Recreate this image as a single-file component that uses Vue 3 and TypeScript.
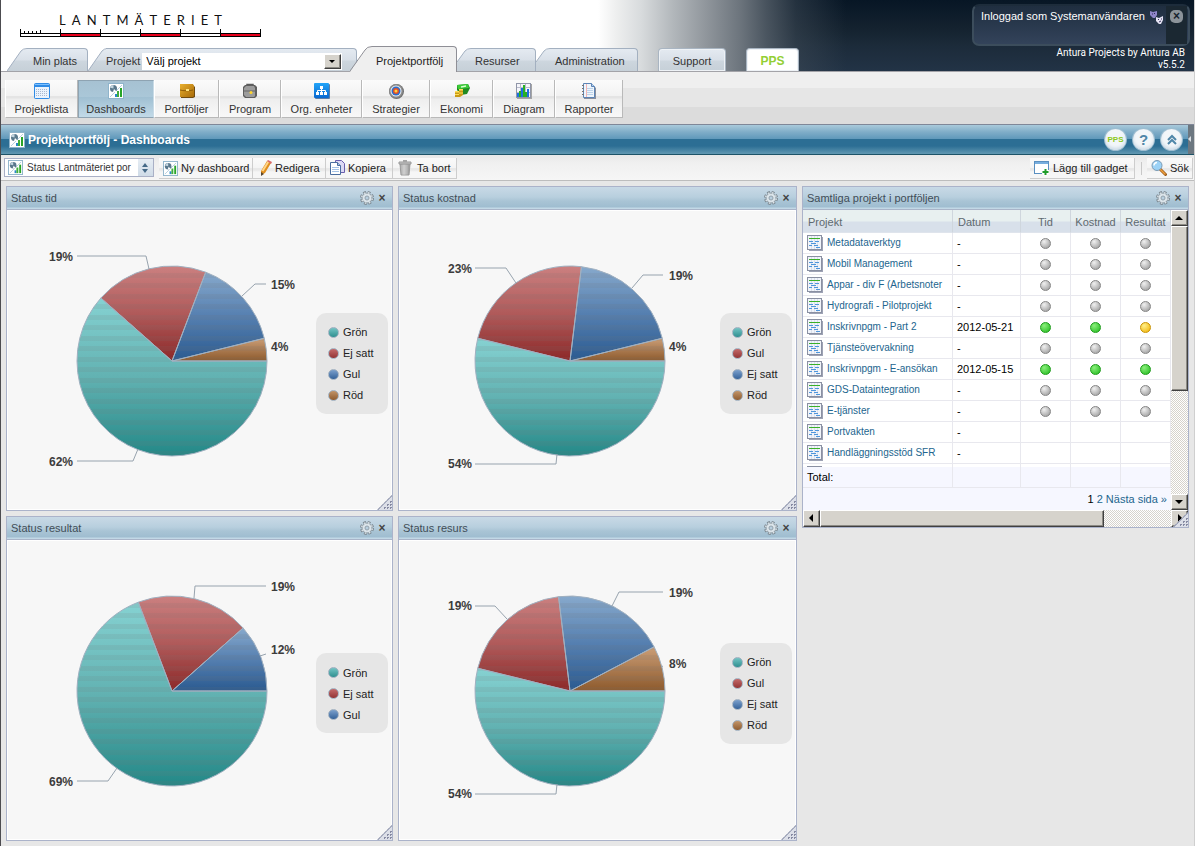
<script setup lang="ts">
import { ref } from 'vue'

interface Slice {
  label: string
  tone: string
  value: number
  percent: string
  text: [number, number]
  line: string
}
interface Chart {
  id: string
  title: string
  cx: number
  slices: Slice[]
}

const logoLetters = 'LANTMÄTERIET'.split('')

const navItems = [
  { label: 'Projektlista', icon: 'list', width: 73 },
  { label: 'Dashboards', icon: 'dash', width: 76 },
  { label: 'Portföljer', icon: 'wallet', width: 65 },
  { label: 'Program', icon: 'case', width: 62 },
  { label: 'Org. enheter', icon: 'org', width: 81 },
  { label: 'Strategier', icon: 'target', width: 68 },
  { label: 'Ekonomi', icon: 'money', width: 63 },
  { label: 'Diagram', icon: 'bars', width: 62 },
  { label: 'Rapporter', icon: 'report', width: 68 },
]

const tones: Record<string, string[]> = {
  green: ['#86d2d2', '#62b2b2', '#238887'],
  red: ['#cb8080', '#b05a5a', '#8c2828'],
  blue: ['#87a9cc', '#557fb0', '#2a5a90'],
  brown: ['#cb9f78', '#ab7b51', '#8d5a2c'],
}

const charts: Chart[] = [
  {
    id: 'tid', title: 'Status tid', cx: 165,
    slices: [
      { label: 'Grön', tone: 'green', value: 16, percent: '62%', text: [42, 256], line: '70,251 126,251 131,239' },
      { label: 'Ej satt', tone: 'red', value: 5, percent: '19%', text: [42, 51], line: '70,46 139,46 142,59' },
      { label: 'Gul', tone: 'blue', value: 4, percent: '15%', text: [264, 79], line: '259,74 248,74 235,86' },
      { label: 'Röd', tone: 'brown', value: 1, percent: '4%', text: [264, 141], line: '' },
    ],
  },
  {
    id: 'kostnad', title: 'Status kostnad', cx: 171,
    slices: [
      { label: 'Grön', tone: 'green', value: 14, percent: '54%', text: [49, 258], line: '76,254 157,254 158,244' },
      { label: 'Gul', tone: 'red', value: 6, percent: '23%', text: [49, 63], line: '76,58 107,58 117,73' },
      { label: 'Ej satt', tone: 'blue', value: 5, percent: '19%', text: [270, 70], line: '264,65 244,65 233,78' },
      { label: 'Röd', tone: 'brown', value: 1, percent: '4%', text: [270, 141], line: '' },
    ],
  },
  {
    id: 'resultat', title: 'Status resultat', cx: 165,
    slices: [
      { label: 'Grön', tone: 'green', value: 18, percent: '69%', text: [42, 246], line: '70,241 101,241 110,228' },
      { label: 'Ej satt', tone: 'red', value: 5, percent: '19%', text: [264, 51], line: '259,46 188,46 187,58' },
      { label: 'Gul', tone: 'blue', value: 3, percent: '12%', text: [264, 114], line: '259,114 253,116' },
    ],
  },
  {
    id: 'resurs', title: 'Status resurs', cx: 171,
    slices: [
      { label: 'Grön', tone: 'green', value: 14, percent: '54%', text: [49, 258], line: '76,254 157,254 158,244' },
      { label: 'Gul', tone: 'red', value: 5, percent: '19%', text: [49, 70], line: '76,66 96,66 108,79' },
      { label: 'Ej satt', tone: 'blue', value: 5, percent: '19%', text: [270, 57], line: '264,52 220,52 213,66' },
      { label: 'Röd', tone: 'brown', value: 2, percent: '8%', text: [270, 128], line: '264,126 262,127' },
    ],
  },
]

const radius = 95
const centerY = 151

function slicePaths(chart: Chart): { d: string; tone: string }[] {
  const total = chart.slices.reduce((sum, s) => sum + s.value, 0)
  let start = 0
  return chart.slices.map((s) => {
    const sweep = (s.value / total) * Math.PI * 2
    const end = start + sweep
    const point = (a: number) =>
      `${(chart.cx + radius * Math.cos(a)).toFixed(2)} ${(centerY + radius * Math.sin(a)).toFixed(2)}`
    const d = `M${chart.cx} ${centerY}L${point(start)}A${radius} ${radius} 0 ${sweep > Math.PI ? 1 : 0} 1 ${point(end)}Z`
    start = end
    return { d, tone: s.tone }
  })
}

const rows = [
  { name: 'Metadataverktyg', date: '-', marks: ['grey', 'grey', 'grey'] },
  { name: 'Mobil Management', date: '-', marks: ['grey', 'grey', 'grey'] },
  { name: 'Appar - div F (Arbetsnoter', date: '-', marks: ['grey', 'grey', 'grey'] },
  { name: 'Hydrografi - Pilotprojekt', date: '-', marks: ['grey', 'grey', 'grey'] },
  { name: 'Inskrivnpgm - Part 2', date: '2012-05-21', marks: ['green', 'green', 'yellow'] },
  { name: 'Tjänsteövervakning', date: '-', marks: ['grey', 'grey', 'grey'] },
  { name: 'Inskrivnpgm - E-ansökan', date: '2012-05-15', marks: ['green', 'green', 'green'] },
  { name: 'GDS-Dataintegration', date: '-', marks: ['grey', 'grey', 'grey'] },
  { name: 'E-tjänster', date: '-', marks: ['grey', 'grey', 'grey'] },
  { name: 'Portvakten', date: '-', marks: ['', '', ''] },
  { name: 'Handläggningsstöd SFR', date: '-', marks: ['', '', ''] },
  { name: '', date: '', marks: ['', '', ''] },
]

const project = ref('Välj projekt')
const dashboard = ref('Status Lantmäteriet por')
</script>

<template>
  <div class="page">
    <svg class="sprite" aria-hidden="true">
      <defs>
        <linearGradient v-for="(stops, name) in tones" :id="'g-' + name" :key="name" x1="0" y1="0" x2="0" y2="1">
          <stop offset="0" :stop-color="stops[0]" />
          <stop offset="0.5" :stop-color="stops[1]" />
          <stop offset="1" :stop-color="stops[2]" />
        </linearGradient>
        <linearGradient id="g-tab" x1="0" y1="0" x2="0" y2="1">
          <stop offset="0" stop-color="#e4eaf1" />
          <stop offset="0.5" stop-color="#d9e0e8" />
          <stop offset="0.55" stop-color="#cdd6de" />
          <stop offset="1" stop-color="#c6d0d8" />
        </linearGradient>
        <linearGradient id="g-azure" x1="0" y1="0" x2="0" y2="1">
          <stop offset="0" stop-color="#22a4f8" />
          <stop offset="1" stop-color="#0868d0" />
        </linearGradient>
        <linearGradient id="g-gold" x1="0" y1="0" x2="1" y2="1">
          <stop offset="0" stop-color="#e9b02e" />
          <stop offset="1" stop-color="#a86a08" />
        </linearGradient>
        <linearGradient id="g-metal" x1="0" y1="0" x2="1" y2="0">
          <stop offset="0" stop-color="#9a9a9a" />
          <stop offset="0.4" stop-color="#ececec" />
          <stop offset="1" stop-color="#8a8a8a" />
        </linearGradient>
        <pattern id="p-bands" width="300" height="21" patternUnits="userSpaceOnUse">
          <path d="M0 0h300v5H0zM0 10h300v5H0z" fill="#777" fill-opacity="0.12" />
        </pattern>
        <symbol id="i-list" viewBox="0 0 16 16">
          <rect x="0" y="0" width="16" height="16" rx="2" fill="#2f8be6" />
          <rect x="1" y="4" width="14" height="11" fill="#eaf3fd" />
          <path d="M1 1.500h14" stroke="#7cc0ff" />
          <path d="M2 6.500h12M2 8.500h12M2 10.500h12M2 12.500h12" stroke="#a9b8d0" stroke-dasharray="1 1" />
        </symbol>
        <symbol id="i-dash" viewBox="0 0 16 16">
          <rect x="0.5" y="0.5" width="15" height="15" fill="#fff" stroke="#8fb4cb" />
          <path d="M2 14 14 2" stroke="#b6cfde" stroke-width="1" />
          <circle cx="5.500" cy="5.500" r="3.500" fill="#59788c" />
          <path d="M5.500 5.500V2a3.500 3.500 0 0 0-3.400 2.800z" fill="#c2d4df" />
          <path d="m6 6 3 3H5z" fill="#fff" />
          <rect x="7" y="11" width="2" height="3" fill="#2b87c8" />
          <rect x="9" y="8" width="2" height="6" fill="#3fae3a" />
          <rect x="12" y="5" width="2" height="9" fill="#28a428" />
        </symbol>
        <symbol id="i-wallet" viewBox="0 0 16 16">
          <path d="M2 2h12l2 2v10l-2 1H2z" fill="#6e4a10" />
          <path d="M1 1h13l1 2v10l-1 1H1z" fill="url(#g-gold)" />
          <path d="M1 7c3 1 10 1 13 0" stroke="#8d5a08" fill="none" />
          <rect x="7" y="6" width="3" height="2" fill="#ffe27a" />
        </symbol>
        <symbol id="i-case" viewBox="0 0 16 16">
          <path d="M5 4V1.500h6V4" stroke="#5b5b5b" stroke-width="1.500" fill="none" />
          <path d="m1 4 2-2h10l2 2v9l-2 2H3l-2-2z" fill="#5e5e5e" />
          <path d="m2 5 2-2h8l1 2v8l-1 1H4l-2-2z" fill="#9c9c9c" />
          <path d="M2 8h12" stroke="#666" />
          <circle cx="9" cy="9.500" r="1.500" fill="#ffd52e" />
        </symbol>
        <symbol id="i-org" viewBox="0 0 16 16">
          <rect x="1" y="1" width="15" height="15" rx="1" fill="#5b7ea8" />
          <rect x="0" y="0" width="15" height="15" rx="1" fill="url(#g-azure)" />
          <path d="M6 3h3v3H6zM2 9h3v3H2zM6 9h3v3H6zM10 9h3v3h-3z" fill="#fff" />
          <path d="M7.500 6v3M3.500 9V7.500h8V9" stroke="#fff" fill="none" />
        </symbol>
        <symbol id="i-target" viewBox="0 0 16 16">
          <circle cx="8.500" cy="8.500" r="7.500" fill="#6f6f6f" />
          <circle cx="8" cy="8" r="7" fill="#8b8b8b" />
          <circle cx="8" cy="8" r="5.500" fill="#e8eef5" />
          <circle cx="8" cy="8" r="4.500" fill="#2d6dc8" />
          <circle cx="8" cy="8" r="3" fill="#e2502a" />
          <circle cx="8" cy="8" r="1.500" fill="#ffd23b" />
        </symbol>
        <symbol id="i-money" viewBox="0 0 16 16">
          <path d="m3 2 11-1 2 4-3 6-6 1-4-5z" fill="#1f8a22" />
          <path d="m3 2 11-1 1 4L4 6z" fill="#3ccc38" />
          <path d="m7 4 5-1" stroke="#d8ffd0" stroke-width="1.500" />
          <path d="M1 8h4V6h4v6l-3 2H1z" fill="#c99a14" />
          <path d="M1 8h4v1.500H1zM5 6h4v1.500H5zM1 11h4v1H1zM5 9.500h4v1H5z" fill="#ffe05a" />
        </symbol>
        <symbol id="i-bars" viewBox="0 0 16 16">
          <rect x="1" y="1" width="15" height="15" fill="#a5a5a5" />
          <rect x="0.500" y="0.500" width="14" height="14" fill="#f5f5fa" stroke="#9096a8" />
          <path d="M4.500 1v13M9.500 1v13M1 4.500h13M1 9.500h13" stroke="#b9bccb" />
          <path d="M1 10h2v4H1zM5 5h2v9H5zM11 6h2v8h-2z" fill="#1d6fe0" />
          <path d="M3 8h2v6H3zM7 2h2v12H7zM9 9h2v5H9z" fill="#27b023" />
        </symbol>
        <symbol id="i-report" viewBox="0 0 16 16">
          <path d="M3 1h8l4 4v11H3z" fill="#8a8f9c" />
          <path d="M2.500 0.500h8l3 3v11h-11z" fill="#eef5fc" stroke="#5c84b6" />
          <path d="M10.500 0.500v3h3" fill="#b6d2ee" stroke="#5c84b6" />
          <path d="M5.500 1v13" stroke="#f0b4b4" />
          <path d="M6 5.500h6M6 7.500h6M6 9.500h6M6 11.500h6" stroke="#bcd3ea" />
          <path d="M1 2.500h2M1 5.500h2M1 8.500h2M1 11.500h2" stroke="#777" />
        </symbol>
        <symbol id="i-pencil" viewBox="0 0 16 16">
          <path d="M4 11 10 1l4 2-6 10-4 2z" fill="#e08f1e" />
          <path d="m5.500 11 6-9.500" stroke="#ffd58a" stroke-width="2" />
          <path d="m10 1 1-1 4 2-1 2z" fill="#d86a6a" />
          <path d="m4 12 3 2-3 2z" fill="#5a4630" />
        </symbol>
        <symbol id="i-copy" viewBox="0 0 16 16">
          <path d="M5.500 0.500h6l3 3v9h-9z" fill="#dcd8f4" stroke="#6a5fae" />
          <path d="M0.500 2.500h7l3 3v9h-10z" fill="#fff" stroke="#4a6d9f" />
          <path d="M7.500 2.500v3h3" fill="#a9c4e4" stroke="#4a6d9f" />
          <path d="M2 7.500h7M2 9.500h7M2 11.500h7" stroke="#a4c2e6" />
        </symbol>
        <symbol id="i-trash" viewBox="0 0 16 16">
          <path d="M3 4h10l-1 11H4z" fill="url(#g-metal)" stroke="#9b9b9b" />
          <path d="M6 5v9M8 5v9M10 5v9" stroke="#b4b4b4" />
          <path d="M2 2h12v2H2z" fill="#c4c4c4" stroke="#999" />
          <path d="M6 0h4v2H6z" fill="#a5a5a5" />
        </symbol>
        <symbol id="i-addgadget" viewBox="0 0 16 16">
          <rect x="0.500" y="1.500" width="14" height="12" fill="#fff" stroke="#5a8fc0" />
          <path d="M1 2h13v2H1z" fill="#78aede" />
          <path d="M8 12h7M11.500 8.500v7" stroke="#fff" stroke-width="4" />
          <path d="M8.500 12h6M11.500 9v6" stroke="#1f9c2a" stroke-width="2" />
        </symbol>
        <symbol id="i-search" viewBox="0 0 16 16">
          <path d="m9 9 5.500 5.500" stroke="#9a5a1a" stroke-width="3" stroke-linecap="round" />
          <path d="m9 9 5 5" stroke="#f0a03c" stroke-width="1.500" stroke-linecap="round" />
          <circle cx="6" cy="5.500" r="5" fill="#9cd2f6" stroke="#7a9ab4" />
          <path d="M3 5.500a3 3 0 0 1 3-3" stroke="#fff" stroke-width="1.500" fill="none" />
        </symbol>
        <symbol id="i-gantt" viewBox="0 0 16 16">
          <path d="M2 2h14v14H2z" fill="#9da2b4" />
          <path d="M0 0h15v15H0z" fill="#8a90a2" />
          <path d="M1 1h13v13H1z" fill="#f1f4fa" />
          <path d="M4 1h1v13H4zM7 1h1v13H7zM10 1h1v13h-1z" fill="#dbe0ec" />
          <path d="M2 3h11v1H2z" fill="#39b028" />
          <path d="M2 6h4v1H2zM8 6h4v1H8zM4 8h5v1H4zM2 10h3v1H2zM7 10h4v1H7zM9 12h4v1H9z" fill="#4f96dc" />
        </symbol>
        <symbol id="i-gear" viewBox="0 0 14 14">
          <circle cx="7" cy="7" r="5" fill="none" stroke="#7c8891" stroke-width="4" stroke-dasharray="2.430 1.500" />
          <circle cx="7" cy="7" r="5" fill="#dbe4ea" stroke="#8b979f" />
          <circle cx="7" cy="7" r="5.300" fill="none" stroke="#dbe4ea" stroke-width="1.500" stroke-dasharray="1.500 2.660" stroke-dashoffset="-0.500" />
          <circle cx="7" cy="7" r="2" fill="#b8cfdf" stroke="#94a2ac" />
        </symbol>
        <symbol id="i-masks" viewBox="0 0 16 16">
          <path d="m1 2 3 1 4-1v4L6 9H4L1 6z" fill="#8f86c8" />
          <path d="M3 5h1M5 4.500h1" stroke="#312a5c" />
          <path d="m7 8 3 1 4-2v4l-2 4h-2L7 12z" fill="#e6e4f4" />
          <path d="M9 10.500h1M12 10h1M10 13l2-1" stroke="#3b3560" />
        </symbol>
      </defs>
    </svg>

    <header class="banner">
      <div class="brand" aria-label="LANTMÄTERIET">
        <div class="letters"><span v-for="(l, i) in logoLetters" :key="i">{{ l }}</span></div>
        <svg class="ruler" viewBox="0 0 241 8" aria-hidden="true">
          <path d="M0 4h241v4H0z" fill="#000" />
          <path d="M1 5h239v2H1z" fill="#fff" />
          <path d="M41 5h39v2H41zM121 5h39v2h-39zM201 5h39v2h-39z" fill="#e8001c" />
          <path d="M0.500 0v8M40.500 0v8M80.500 0v8M120.500 0v8M160.500 0v8M200.500 0v8M240.500 0v8M20.500 1v3M4.500 2v2M8.500 2v2M12.500 2v2M16.500 2v2" stroke="#000" />
        </svg>
      </div>

      <nav class="tabs" aria-label="Huvudmeny">
        <a class="tab" href="#"><svg viewBox="0 0 20 23"><path d="M0 23 14 3Q16 1 20 1V23z" fill="url(#g-tab)" /><path d="M0 23 14 3Q16 0.500 20 0.500" fill="none" stroke="#a3b0c0" /></svg><span class="face w-min">Min plats</span></a>
        <div class="tab">
          <svg viewBox="0 0 20 23"><path d="M0 23 14 3Q16 1 20 1V23z" fill="url(#g-tab)" /><path d="M0 23 14 3Q16 0.500 20 0.500" fill="none" stroke="#a3b0c0" /></svg>
          <div class="face w-projekt">
            <label for="project">Projekt</label>
            <span class="combo">
              <select id="project" v-model="project"><option>Välj projekt</option></select>
              <i aria-hidden="true"></i>
            </span>
          </div>
        </div>
        <a class="tab current" href="#"><svg viewBox="0 0 22 26"><path d="M0 26 15 4Q17 1 22 1V26z" fill="#efefef" /><path d="M0 25 15 4Q17 0.500 22 0.500" fill="none" stroke="#8f8f96" /></svg><span class="face w-port">Projektportfölj</span></a>
        <a class="tab" href="#"><svg viewBox="0 0 20 23"><path d="M0 14 8 3Q10 1 14 1H20V23H0z" fill="url(#g-tab)" /><path d="M0 14 8 3Q10 0.500 14 0.500H20" fill="none" stroke="#a3b0c0" /></svg><span class="face w-res">Resurser</span></a>
        <a class="tab" href="#"><svg viewBox="0 0 20 23"><path d="M0 14 8 3Q10 1 14 1H20V23H0z" fill="url(#g-tab)" /><path d="M0 14 8 3Q10 0.500 14 0.500H20" fill="none" stroke="#a3b0c0" /></svg><span class="face w-adm">Administration</span></a>
        <a class="tab solo" href="#">Support</a>
        <a class="tab solo pps" href="#">PPS</a>
      </nav>

      <div class="account">
        <div class="userbox">
          <span>Inloggad som Systemanvändaren</span>
          <svg class="masks"><use href="#i-masks" /></svg>
          <div class="strip"><button type="button" aria-label="Stäng">×</button></div>
        </div>
        <div class="version">Antura Projects by Antura AB<br />v5.5.2</div>
      </div>
    </header>

    <nav class="subnav" aria-label="Projektportfölj">
      <a
        v-for="item in navItems"
        :key="item.label"
        href="#"
        :class="{ active: item.icon === 'dash' }"
        :style="{ width: item.width + 'px' }"
      >
        <svg class="ico"><use :href="'#i-' + item.icon" /></svg>
        {{ item.label }}
      </a>
    </nav>

    <div class="titlebar">
      <svg class="ico"><use href="#i-dash" /></svg>
      <h1>Projektportfölj - Dashboards</h1>
      <div class="rounds">
        <button type="button" class="lime">PPS</button>
        <button type="button" class="help">?</button>
        <button type="button" aria-label="Minimera">
          <svg viewBox="0 0 12 12"><path d="m2 6 4-4 4 4M2 10l4-4 4 4" fill="none" stroke="#4f86a8" stroke-width="2" /></svg>
        </button>
      </div>
      <button type="button" class="handle" aria-label="Visa panel"></button>
    </div>

    <div class="toolbar">
      <div class="picker">
        <svg class="ico"><use href="#i-dash" /></svg>
        <select v-model="dashboard" aria-label="Dashboard"><option>Status Lantmäteriet por</option></select>
        <i aria-hidden="true"><svg viewBox="0 0 8 10"><path d="m4 0 3 4H1zM4 10 1 6h6z" fill="#456a88" /></svg></i>
      </div>
      <div class="tools">
        <button type="button" class="t-new"><svg class="ico"><use href="#i-dash" /></svg>Ny dashboard</button>
        <button type="button" class="t-edit"><svg class="ico"><use href="#i-pencil" /></svg>Redigera</button>
        <button type="button" class="t-copy"><svg class="ico"><use href="#i-copy" /></svg>Kopiera</button>
        <button type="button" class="t-del"><svg class="ico"><use href="#i-trash" /></svg>Ta bort</button>
      </div>
      <div class="tools right">
        <button type="button" class="t-add"><svg class="ico"><use href="#i-addgadget" /></svg>Lägg till gadget</button>
        <span class="rule"></span>
        <button type="button" class="t-find"><svg class="ico"><use href="#i-search" /></svg>Sök</button>
      </div>
    </div>

    <main class="board">
      <section v-for="(chart, index) in charts" :key="chart.id" class="panel" :class="'slot' + index">
        <header>
          <h2>{{ chart.title }}</h2>
          <button type="button" aria-label="Inställningar"><svg class="gear"><use href="#i-gear" /></svg></button>
          <button type="button" class="close" aria-label="Stäng">×</button>
        </header>
        <div class="body">
          <svg class="pie" viewBox="0 0 300 300" role="img" :aria-label="chart.title">
            <path v-for="p in slicePaths(chart)" :key="p.tone" :d="p.d" :fill="`url(#g-${p.tone})`" />
            <circle :cx="chart.cx" :cy="centerY" :r="radius" fill="url(#p-bands)" />
            <path v-for="p in slicePaths(chart)" :key="p.tone + '-edge'" :d="p.d" fill="none" stroke="#a0b0c0" />
            <g v-for="s in chart.slices" :key="s.label">
              <polyline v-if="s.line" :points="s.line" fill="none" stroke="#97a3ae" />
              <text :x="s.text[0]" :y="s.text[1]">{{ s.percent }}</text>
            </g>
          </svg>
          <ul class="legend">
            <li v-for="s in chart.slices" :key="s.label"><i :class="s.tone"></i>{{ s.label }}</li>
          </ul>
        </div>
        <span class="grip"></span>
      </section>

      <section class="panel projects">
        <header>
          <h2>Samtliga projekt i portföljen</h2>
          <button type="button" aria-label="Inställningar"><svg class="gear"><use href="#i-gear" /></svg></button>
          <button type="button" class="close" aria-label="Stäng">×</button>
        </header>
        <div class="scroller">
          <div class="sheet">
            <div class="clip">
              <table>
                <colgroup><col /><col class="c-date" /><col class="c-mark" /><col class="c-mark" /><col class="c-mark" /></colgroup>
                <thead>
                  <tr><th>Projekt</th><th>Datum</th><th class="mid">Tid</th><th class="mid">Kostnad</th><th class="mid">Resultat</th></tr>
                </thead>
                <tbody>
                  <tr v-for="(row, r) in rows" :key="r">
                    <td><a href="#"><svg class="ico"><use href="#i-gantt" /></svg>{{ row.name }}</a></td>
                    <td>{{ row.date }}</td>
                    <td v-for="(m, k) in row.marks" :key="k" class="mid"><i v-if="m" class="dot" :class="m"></i></td>
                  </tr>
                </tbody>
              </table>
            </div>
            <div class="total"><span>Total:</span><span></span><span></span><span></span><span></span></div>
            <div class="pager"><b>1</b> <a href="#">2</a> <a href="#">Nästa sida »</a></div>
          </div>
          <div class="vbar" aria-hidden="true">
            <span class="key up"></span><span class="thumb"></span><span class="track"></span><span class="key down"></span>
          </div>
        </div>
        <div class="hbar" aria-hidden="true">
          <span class="key left"></span><span class="thumb"></span><span class="track"></span><span class="key next"></span>
        </div>
        <span class="grip"></span>
      </section>
    </main>
  </div>
</template>

<style>
html,
body {
  margin: 0;
  background: #e7e7e7;
}
</style>

<style scoped>
* { box-sizing: border-box; }
.page {
  min-height: 100vh;
  border-left: 1px solid #4c4c50;
  border-right: 1px solid #cfcfcf;
  background: #e7e7e7;
  font-family: "Liberation Sans", Arial, sans-serif;
  font-size: 11px;
  color: #333;
}
.sprite { position: absolute; width: 0; height: 0; }
a { color: inherit; text-decoration: none; }
button { font: inherit; color: inherit; border: 0; padding: 0; margin: 0; background: none; cursor: pointer; }
.ico { width: 16px; height: 16px; flex: none; }

/* banner */
.banner {
  position: relative;
  display: flex;
  flex-direction: column;
  justify-content: space-between;
  height: 72px;
  border-bottom: 1px solid #a3a3a8;
  background:
    linear-gradient(90deg, #fff 597px, #eeefef 615px, #d8dbdd 640px, #b2b7bb 672px, #90969c 705px, rgba(112, 120, 128, 0.95) 740px, rgba(88, 98, 108, 0.8) 765px, rgba(64, 76, 88, 0.5) 795px, rgba(50, 64, 80, 0) 845px),
    linear-gradient(#071625, #14222f 40%, #1c2b3a 65%, #223346);
}
.brand { width: 241px; margin: 12px 0 0 19px; }
.letters {
  display: flex;
  justify-content: space-between;
  margin: 0 39px 0 39px;
  font-family: Lato, sans-serif;
  font-size: 13px;
  line-height: 16px;
  color: #111;
}
.ruler { display: block; width: 241px; height: 8px; margin-top: 1px; }

.tabs { display: flex; align-items: flex-end; padding-left: 6px; line-height: 14px; }
.tab { display: flex; height: 23px; color: #333; }
.tab > svg { width: 20px; height: 23px; flex: none; }
.face {
  display: flex;
  align-items: center;
  border-top: 1px solid #a3b0c0;
  border-right: 1px solid #a3b0c0;
  border-radius: 0 4px 0 0;
  background: linear-gradient(#e4eaf1, #d9e0e8 50%, #cdd6de 55%, #c6d0d8);
  padding-top: 2px;
}
.w-min { width: 61px; padding-left: 6px; }
.w-projekt { width: 251px; margin-left: -2px; gap: 2px; }
.current { height: 26px; margin: 0 0 -1px -7px; z-index: 1; color: #222; }
.current > svg { width: 22px; height: 26px; }
.current .face { border-color: #8f8f96; background: #efefef; }
.w-port { width: 85px; padding-left: 4px; }
.w-res { width: 61px; margin-left: -2px; }
.w-adm { width: 83px; margin-left: -1px; }
.solo {
  align-items: center;
  justify-content: center;
  width: 68px;
  margin-left: 20px;
  padding-top: 2px;
  border: 1px solid #a9b5c2;
  border-bottom: 0;
  border-radius: 4px 4px 0 0;
  background: linear-gradient(#e4eaf1, #d9e0e8 50%, #cdd6de 55%, #c6d0d8);
  box-shadow: inset 0 0 0 1px #eef2f6;
}
.pps { width: 53px; background: #fff; color: #93cf35; font-weight: bold; font-size: 12px; }
.combo { position: relative; display: flex; width: 200px; height: 17px; background: #fff; }
.combo select {
  appearance: none;
  width: 100%;
  border: 0;
  padding: 0 20px 0 4px;
  background: none;
  font: inherit;
  color: #000;
}
.combo i, .key, .thumb {
  background: #d6d3cc;
  border: 1px solid;
  border-color: #fff #404040 #404040 #fff;
  box-shadow: inset -1px -1px #8c8a84;
}
.combo i { position: absolute; right: 1px; top: 1px; width: 17px; height: 15px; pointer-events: none; }
.combo i::after {
  content: "";
  position: absolute;
  left: 4px;
  top: 5px;
  border: 3px solid transparent;
  border-top-color: #000;
}

.account { position: absolute; right: 4px; top: 4px; color: #fff; }
.userbox {
  display: flex;
  width: 218px;
  height: 42px;
  padding: 0 1px 0 7px;
  line-height: 20px;
  border: 2px solid #3c4d5c;
  border-top-color: #1d2c3b;
  border-radius: 7px;
  background: linear-gradient(#1f2e40, #33435a);
}
.userbox span { flex: 1; white-space: nowrap; }
.masks { width: 16px; height: 16px; margin: 3px 1px 0 0; }
.strip { width: 21px; background: #1b2832; text-align: center; }
.strip button {
  width: 13px;
  height: 13px;
  border-radius: 5px;
  background: #8c9399;
  color: #16222c;
  font-weight: bold;
  font-size: 12px;
  line-height: 12px;
}
.version { padding: 1px 5px 0 0; font-family: Roboto, sans-serif; font-size: 10px; line-height: 12px; text-align: right; }

/* section navigation */
.subnav {
  display: flex;
  padding: 8px 4px 6px;
  background: linear-gradient(#efefef 16px, #e6e6e6 16px 35px, #dcdcdc 35px);
}
.subnav a {
  display: flex;
  flex-direction: column;
  align-items: center;
  gap: 4px;
  height: 38px;
  padding-top: 3px;
  border-right: 1px solid #b9b9b9;
  border-bottom: 1px solid #b9b9b9;
  border-left: 1px solid #fff;
  background: linear-gradient(#fbfbfb, #f2f2f2 16px, #e4e4e4 16px 18px, #eee 19px, #f8f8f8);
  line-height: 13px;
  white-space: nowrap;
}
.subnav a.active {
  padding-top: 2px;
  border: 1px solid #8ea3b2;
  border-right-color: #c9dbe6;
  background: linear-gradient(#a6c1d2, #aac7d8 16px, #9fbfd2 16px, #c2dae8);
}

/* title bar */
.titlebar {
  display: flex;
  align-items: center;
  height: 31px;
  padding-left: 8px;
  border-top: 1px solid #7f8798;
  border-bottom: 1px solid #1d5368;
  background: linear-gradient(#a9cadb, #80adc8 7px, #5f98ba 14px, #2c6e94 14px 21px, #6198b2);
  color: #fff;
}
.titlebar h1 { flex: 1; margin: 0 0 0 3px; font-size: 12px; line-height: 16px; }
.rounds { display: flex; gap: 7px; margin-right: 6px; }
.rounds button {
  display: flex;
  align-items: center;
  justify-content: center;
  width: 21px;
  height: 21px;
  border-radius: 50%;
  background: #f2f6f9;
  box-shadow: 0 0 0 1px #9dbdd0, inset 0 -2px 3px #cfdde8;
  color: #4f86a8;
}
.rounds svg { width: 12px; height: 12px; }
.rounds .lime { font-size: 8px; font-weight: bold; color: #8cc820; }
.rounds .help { font-size: 15px; font-weight: bold; }
.handle { width: 6px; height: 29px; background: #6c7780; position: relative; }
.handle::after { content: ""; position: absolute; left: 0; top: 11px; border: 3px solid transparent; border-left: 0; border-right-color: #d8dde2; }

/* toolbar */
.toolbar {
  display: flex;
  align-items: flex-start;
  height: 26px;
  padding: 3px 1px 0 3px;
  border-bottom: 1px solid #bdbdbd;
  background: linear-gradient(#e8e8e8, #f0f0f0 8px, #f6f6f6);
}
.picker {
  display: flex;
  align-items: center;
  width: 150px;
  height: 19px;
  padding-left: 3px;
  border: 1px solid #a9b0c6;
  background: #fff;
}
.picker .ico, .t-new .ico { width: 15px; height: 15px; }
.picker select { appearance: none; flex: 1; min-width: 0; border: 0; padding: 0 0 0 4px; background: none; font: inherit; font-size: 10px; color: #333; }
.picker i { width: 15px; height: 17px; padding: 4px 3px; background: linear-gradient(#e6edf4, #cfdbe7); }
.picker i svg { display: block; width: 8px; height: 10px; }
.tools { display: flex; height: 21px; margin-left: 5px; }
.tools button {
  display: flex;
  align-items: center;
  gap: 4px;
  padding: 0 0 0 4px;
  border-right: 1px solid #cdcdcd;
  border-bottom: 1px solid #cdcdcd;
  background: linear-gradient(#fafafa, #f4f4f4 10px, #e8e8e8 10px 12px, #f6f6f6 14px);
  white-space: nowrap;
  color: #222;
}
.tools .t-new { width: 94px; gap: 3px; }
.tools .t-edit { width: 73px; gap: 2px; }
.tools .t-copy { width: 67px; gap: 2px; }
.tools .t-del { width: 64px; }
.tools .t-add { width: 105px; gap: 3px; }
.tools .t-find { width: 46px; gap: 3px; }
.right { margin-left: auto; }
.rule { width: 1px; margin: 4px 5px 4px 6px; background: #c8c8c8; }

/* dashboard grid */
.board {
  display: grid;
  grid-template-columns: 387fr 399fr 387fr;
  gap: 5px;
  align-items: start;
  padding: 5px;
}
.slot0 { grid-area: 1 / 1; }
.slot1 { grid-area: 1 / 2; }
.slot2 { grid-area: 2 / 1; }
.slot3 { grid-area: 2 / 2; }
.projects { grid-area: 1 / 3 / 3 / 4; }
.panel { position: relative; border: 1px solid #abb3ca; background: #fff; min-width: 0; }
.panel header {
  display: flex;
  align-items: center;
  height: 23px;
  padding: 0 2px 0 4px;
  border-bottom: 1px solid #a9b4c8;
  background: linear-gradient(#c8d9e6, #b8cfde 10px, #a9c4d5 14px, #9fbdd0 20px, #c2d8e6 21px);
}
.panel h2 { flex: 1; margin: 0; font-size: 11px; font-weight: normal; line-height: 14px; color: #3f4d57; }
.gear { display: block; width: 14px; height: 14px; }
.close { width: 16px; font-size: 12px; font-weight: bold; line-height: 14px; color: #444; }
.body {
  display: flex;
  align-items: center;
  justify-content: space-between;
  height: 300px;
  border: 1px solid #fff;
  background: #f7f7f7;
}
.pie { width: 300px; height: 300px; flex: none; margin-left: -1px; }
.pie text { font-size: 12px; font-weight: bold; fill: #3c3c3c; }
.legend {
  flex: none;
  width: 72px;
  margin: 6px 3px 0 0;
  padding: 9px 0 8px 12px;
  border-radius: 10px;
  background: #e6e6e6;
  list-style: none;
}
.legend li { display: flex; align-items: center; gap: 4px; height: 21px; color: #222; }
.legend i { width: 11px; height: 11px; border-radius: 50%; border: 1px solid #a0b0c0; }
.legend .green { background: linear-gradient(#74c4c4, #2f9090); }
.legend .red { background: linear-gradient(#c46a6a, #943434); }
.legend .blue { background: linear-gradient(#7ba0cc, #34629a); }
.legend .brown { background: linear-gradient(#c29468, #8f5c30); }
.grip {
  position: absolute;
  right: 0;
  bottom: 0;
  width: 15px;
  height: 15px;
  background:
    linear-gradient(135deg, #a2a8bc 54%, #dcdfe8 54% 64%, transparent 64%),
    conic-gradient(#868aa2 25%, #dcdfe8 0) 0 0 / 3px 3px;
  clip-path: polygon(100% 0, 100% 100%, 0 100%);
}

/* project table */
.scroller { display: flex; }
.sheet { flex: 1; min-width: 0; }
.clip { height: 257px; overflow: hidden; }
table { width: 100%; table-layout: fixed; border-collapse: separate; border-spacing: 0; }
.c-date { width: 68px; }
.c-mark { width: 50px; }
th {
  height: 23px;
  padding: 2px 5px 0;
  border-right: 1px solid #cfd6dd;
  border-bottom: 1px solid #dfe4ec;
  background: linear-gradient(#e8f0f0 11px, #d8e0ea 12px);
  font-weight: normal;
  text-align: left;
  color: #5f6a70;
}
td {
  height: 21px;
  padding: 2px 0 2px 4px;
  border-right: 1px solid #e8e8ee;
  border-bottom: 1px solid #e8e8ee;
  color: #000;
  line-height: 16px;
  vertical-align: top;
}
td a { display: flex; align-items: center; gap: 4px; font-size: 10px; white-space: nowrap; color: #22658e; }
th.mid { padding: 2px 0 0; }
.mid { text-align: center; }
td.mid { padding: 5px 0 0; }
.dot { display: block; width: 11px; height: 11px; margin: 0 auto; border-radius: 50%; border: 1px solid; }
.grey { border-color: #858585; background: radial-gradient(circle at 35% 30%, #f0f0f0, #949494); }
.green.dot { border-color: #1d9c1a; background: radial-gradient(circle at 35% 30%, #8af07c, #1fb81a); }
.yellow { border-color: #c99200; background: radial-gradient(circle at 35% 30%, #fff08a, #f0b000); }
.total { display: grid; grid-template-columns: 1fr 68px 50px 50px 50px; height: 21px; background: #f6f7ff; color: #000; line-height: 20px; }
.total span { padding-left: 4px; border-right: 1px solid #e8e8ee; border-bottom: 1px solid #e8e8ee; }
.pager { height: 22px; padding-right: 4px; background: #f6f7ff; line-height: 22px; text-align: right; color: #22658e; }
.pager b { font-weight: normal; color: #000; }
.vbar { display: flex; flex-direction: column; width: 17px; }
.hbar { display: flex; height: 17px; }
.track {
  flex: 1;
  background: repeating-conic-gradient(#fff 0 25%, #d6d3cc 0 50%) 0 0 / 2px 2px;
}
.key { position: relative; flex: none; width: 17px; height: 16px; }
.key::after { content: ""; position: absolute; border: 4px solid transparent; }
.up::after { left: 3px; top: 1px; border-bottom-color: #000; }
.down::after { left: 3px; top: 5px; border-top-color: #000; }
.left::after { left: 1px; top: 3px; border-right-color: #000; }
.next::after { left: 6px; top: 3px; border-left-color: #000; }
.vbar .thumb { height: 165px; }
.hbar .key { height: 17px; }
.hbar .thumb { width: 284px; }
</style>
